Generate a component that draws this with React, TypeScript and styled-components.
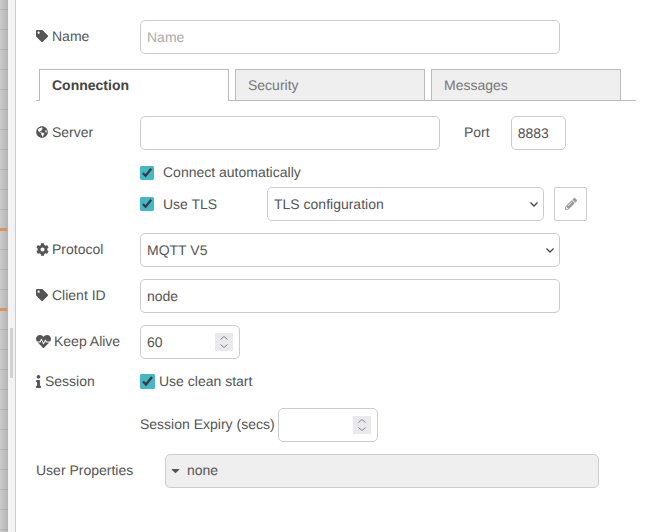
import React from 'react';
import styled, { createGlobalStyle } from 'styled-components';
import { FaTag, FaGlobeAmericas, FaCog, FaHeartbeat, FaInfo, FaPencilAlt, FaCaretDown } from 'react-icons/fa';

const GlobalStyle = createGlobalStyle`
  html, body {
    margin: 0;
    padding: 0;
    background: #fff;
  }
  body {
    font-family: "Liberation Sans", Arial, sans-serif;
    font-size: 14px;
    color: #555;
    text-rendering: geometricPrecision;
  }
  input, select {
    text-rendering: geometricPrecision;
  }
`;

const Page = styled.div`
  display: flex;
  width: 655px;
  height: 532px;
  overflow: hidden;
`;

const Canvas = styled.div`
  position: relative;
  width: 8px;
  flex: none;
  background:
    repeating-linear-gradient(to bottom, transparent 0, transparent 9px, rgba(0, 0, 0, 0.08) 9px, rgba(0, 0, 0, 0.08) 10px, transparent 10px, transparent 20px),
    linear-gradient(to right, #cbcbcb, #b4b4b4);
`;

const Wire = styled.div<{ $top: number }>`
  position: absolute;
  left: 0;
  top: ${({ $top }) => $top}px;
  width: 7px;
  height: 3px;
  background: #d8955f;
`;

const Gutter = styled.div`
  width: 8px;
  flex: none;
  padding: 328px 0 0 2px;
  box-sizing: border-box;
  background: #f3f3f3;
  border-right: 1px solid #ccc;
`;

const GutterThumb = styled.div`
  width: 3px;
  height: 50px;
  background: #d2d2d2;
`;

const Form = styled.div`
  flex: 1;
  display: flex;
  flex-direction: column;
  padding: 20px 19px 0 20px;
`;

const Row = styled.div<{ $top?: number }>`
  display: flex;
  align-items: center;
  margin-top: ${({ $top }) => $top ?? 12}px;
  flex: none;
`;

const Label = styled.label<{ $width?: number; $lift?: number; $gap?: number }>`
  display: flex;
  align-items: center;
  gap: ${({ $gap }) => $gap ?? 4}px;
  width: ${({ $width }) => $width ?? 104}px;
  flex: none;
  margin-top: ${({ $lift }) => -($lift ?? 2)}px;
  line-height: 20px;
  color: #555;
  svg {
    flex: none;
  }
`;

const InfoIcon = styled(FaInfo)`
  width: 5px;
  height: 13px;
`;

const fieldCss = `
  box-sizing: border-box;
  height: 34px;
  padding: 6px;
  margin: 0;
  border: 1px solid #ccc;
  border-radius: 5px;
  background: #fff;
  color: #555;
  font-family: "Liberation Sans", Arial, sans-serif;
  font-size: 14px;
  outline: none;
`;

const Input = styled.input<{ $width: number }>`
  ${fieldCss}
  width: ${({ $width }) => $width}px;
  flex: none;
  &::placeholder {
    color: #aaa;
    opacity: 1;
  }
  &::-webkit-inner-spin-button {
    appearance: none;
    margin: 0;
  }
`;

const chevron = `url("data:image/svg+xml,%3Csvg xmlns='http://www.w3.org/2000/svg' width='8' height='5'%3E%3Cpath d='M.5 .5L4 4l3.5-3.5' fill='none' stroke='%23444' stroke-width='1.3'/%3E%3C/svg%3E")`;

const Select = styled.select<{ $width: number }>`
  ${fieldCss}
  appearance: none;
  width: ${({ $width }) => $width}px;
  flex: none;
  background-image: ${chevron};
  background-repeat: no-repeat;
  background-position: right 5px center;
`;

const NumberField = styled.div`
  position: relative;
  flex: none;
  width: 100px;
  height: 34px;
`;

const Spinner = styled.svg`
  position: absolute;
  top: 8px;
  right: 7px;
  width: 18px;
  height: 18px;
  background: #e9e9ed;
`;

const Tabs = styled.div`
  box-sizing: border-box;
  display: flex;
  gap: 6px;
  height: 32px;
  margin-top: 15px;
  padding-left: 3px;
  border-bottom: 1px solid #bbb;
  flex: none;
`;

const Tab = styled.div<{ $active?: boolean }>`
  box-sizing: border-box;
  width: 190px;
  height: ${({ $active }) => ($active ? 32 : 31)}px;
  padding: 0 12px;
  line-height: 31px;
  border: 1px solid #bbb;
  border-bottom: ${({ $active }) => ($active ? 'none' : '0')};
  background: ${({ $active }) => ($active ? '#fff' : '#efefef')};
  color: ${({ $active }) => ($active ? '#444' : '#777')};
  font-weight: ${({ $active }) => ($active ? 700 : 400)};
`;

const PortLabel = styled.span`
  margin: -2px 21px 0 24px;
  color: #555;
`;

const CheckRow = styled.div<{ $top: number; $height: number; $gap: number; $indent?: number }>`
  display: flex;
  align-items: center;
  gap: ${({ $gap }) => $gap}px;
  height: ${({ $height }) => $height}px;
  margin-top: ${({ $top }) => $top}px;
  padding-left: ${({ $indent }) => $indent ?? 104}px;
  flex: none;
`;

const Check = styled.input.attrs({ type: 'checkbox', defaultChecked: true })<{ $size: number }>`
  width: ${({ $size }) => $size}px;
  height: ${({ $size }) => $size}px;
  margin: 0;
  flex: none;
  accent-color: #43b8c9;
`;

const CheckText = styled.span<{ $width?: number; $lift?: number }>`
  width: ${({ $width }) => ($width ? `${$width}px` : 'auto')};
  flex: none;
  margin-top: ${({ $lift }) => -($lift ?? 0)}px;
`;

const EditButton = styled.button`
  box-sizing: border-box;
  display: flex;
  align-items: center;
  justify-content: center;
  width: 33px;
  height: 34px;
  margin-left: 10px;
  padding: 0;
  border: 1px solid #ccc;
  border-radius: 2px;
  background: #fff;
  color: #999;
  flex: none;
`;

const Indented = styled.div`
  display: flex;
  align-items: center;
  gap: 3px;
  margin-left: 104px;
`;

const ExpiryLabel = styled.span`
  margin-top: -2px;
`;

const Dropdown = styled.div`
  box-sizing: border-box;
  display: flex;
  align-items: center;
  gap: 5px;
  width: 434px;
  height: 34px;
  padding: 0 0 2px 3px;
  border: 1px solid #ccc;
  border-radius: 5px;
  background: #efefef;
  color: #555;
  svg {
    color: #555;
  }
`;

const NumberInput = ({ value }: { value?: string }) => (
  <NumberField>
    <Input $width={100} type="number" defaultValue={value} />
    <Spinner viewBox="0 0 18 18">
      <path d="M5.5 6.5L9 3.5l3.5 3M5.5 11.5L9 14.5l3.5-3" fill="none" stroke="#888" strokeWidth="1" />
    </Spinner>
  </NumberField>
);

export default function App() {
  return (
    <>
      <GlobalStyle />
      <Page>
        <Canvas>
          <Wire $top={228} />
          <Wire $top={308} />
        </Canvas>
        <Gutter>
          <GutterThumb />
        </Gutter>
        <Form>
          <Row $top={0}>
            <Label><FaTag size={12} />Name</Label>
            <Input $width={420} placeholder="Name" />
          </Row>

          <Tabs>
            <Tab $active>Connection</Tab>
            <Tab>Security</Tab>
            <Tab>Messages</Tab>
          </Tabs>

          <Row $top={15}>
            <Label><FaGlobeAmericas size={12} />Server</Label>
            <Input $width={300} />
            <PortLabel>Port</PortLabel>
            <Input $width={55} defaultValue="8883" />
          </Row>

          <CheckRow $top={13} $height={20} $gap={9}>
            <Check $size={14} />
            <CheckText $lift={2}>Connect automatically</CheckText>
          </CheckRow>

          <Row $top={4}>
            <CheckRow $top={0} $height={34} $gap={9}>
              <Check $size={14} />
              <CheckText $width={104}>Use TLS</CheckText>
            </CheckRow>
            <Select $width={277} defaultValue="tls">
              <option value="tls">TLS configuration</option>
            </Select>
            <EditButton><FaPencilAlt size={12} /></EditButton>
          </Row>

          <Row>
            <Label $gap={3}><FaCog size={13} />Protocol</Label>
            <Select $width={420} defaultValue="5">
              <option value="5">MQTT V5</option>
            </Select>
          </Row>

          <Row>
            <Label><FaTag size={12} />Client ID</Label>
            <Input $width={420} defaultValue="node" />
          </Row>

          <Row>
            <Label $gap={3}><FaHeartbeat size={15} />Keep Alive</Label>
            <NumberInput value="60" />
          </Row>

          <Row>
            <Label $lift={0}><InfoIcon />Session</Label>
            <CheckRow $top={0} $height={20} $gap={4} $indent={0}>
              <Check $size={15} />
              <CheckText>Use clean start</CheckText>
            </CheckRow>
          </Row>

          <Row $top={17}>
            <Indented>
              <ExpiryLabel>Session Expiry (secs)</ExpiryLabel>
              <NumberInput />
            </Indented>
          </Row>

          <Row>
            <Label $width={129}>User Properties</Label>
            <Dropdown><FaCaretDown size={13} />none</Dropdown>
          </Row>
        </Form>
      </Page>
    </>
  );
}
